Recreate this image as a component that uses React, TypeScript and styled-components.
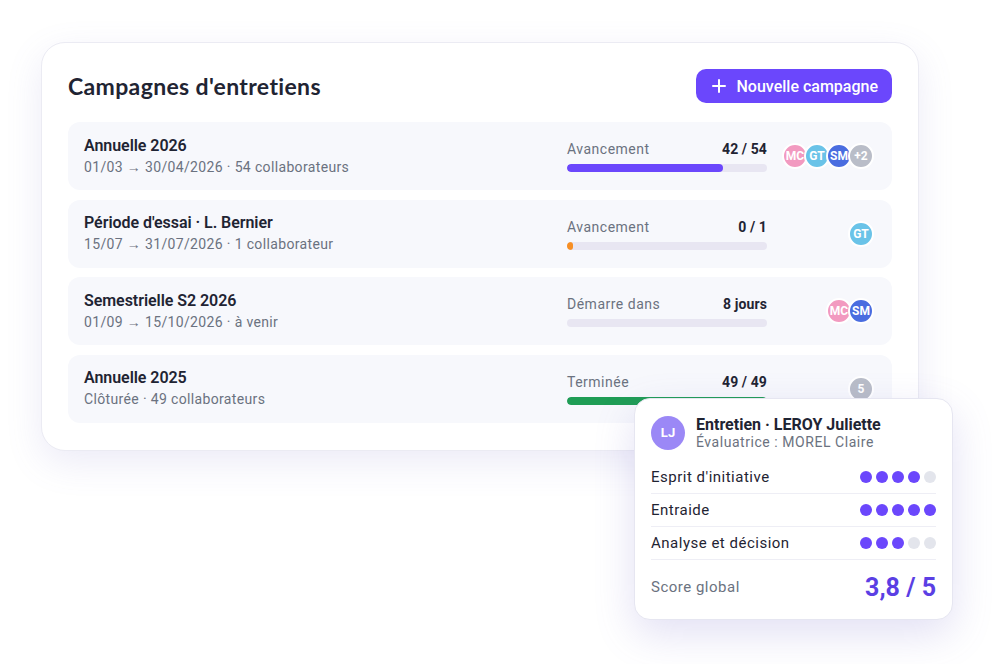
import { styled, createGlobalStyle } from 'styled-components';

const GlobalStyle = createGlobalStyle`
  html, body {
    margin: 0;
    padding: 0;
    background: #ffffff;
  }
  body {
    font-family: Roboto, 'Liberation Sans', sans-serif;
    color: #1f2433;
  }
`;

const Stage = styled.div`
  position: relative;
  width: 1000px;
  height: 664px;
  overflow: hidden;
  padding: 42px 0 0 41px;
  box-sizing: border-box;
`;

const Card = styled.section`
  width: 878px;
  box-sizing: border-box;
  background: #fff;
  border: 1px solid #ebebf3;
  border-radius: 24px;
  padding: 26px 26px 27px 26px;
  box-shadow: 0 12px 36px rgba(120, 110, 200, 0.14);
  display: flex;
  flex-direction: column;
  gap: 19px;
`;

const Header = styled.div`
  display: flex;
  align-items: center;
  justify-content: space-between;
  height: 34px;
`;

const Title = styled.h1`
  margin: 0;
  font-family: Lato, 'Noto Sans', sans-serif;
  font-size: 23px;
  font-weight: 700;
  color: #1f2433;
  letter-spacing: 0.35px;
`;

const PrimaryButton = styled.button`
  display: flex;
  align-items: center;
  gap: 10px;
  height: 34px;
  padding: 0 14px 0 16px;
  border: none;
  border-radius: 10px;
  background: #6b47fc;
  color: #fff;
  font-family: Roboto, sans-serif;
  font-size: 16px;
  font-weight: 500;
`;

const List = styled.div`
  display: flex;
  flex-direction: column;
  gap: 9.5px;
`;

const Row = styled.div`
  display: flex;
  align-items: center;
  height: 68px;
  padding: 0 18px 0 16px;
  background: #f7f8fc;
  border-radius: 12px;
`;

const Info = styled.div`
  flex: 1;
  display: flex;
  flex-direction: column;
  gap: 1px;
`;

const RowTitle = styled.div`
  font-size: 16px;
  font-weight: 600;
  line-height: 20px;
  color: #1f2433;
  letter-spacing: -0.05px;
`;

const RowSub = styled.div`
  font-size: 14px;
  line-height: 20px;
  color: #6b7280;
  letter-spacing: 0.35px;
`;

const Progress = styled.div`
  width: 200px;
  display: flex;
  flex-direction: column;
  gap: 6px;
`;

const ProgressHead = styled.div`
  display: flex;
  justify-content: space-between;
  align-items: center;
  line-height: 18px;
  font-size: 14px;
`;

const ProgressLabel = styled.span`
  color: #6b7280;
  letter-spacing: 0.5px;
`;

const ProgressValue = styled.span`
  font-weight: 700;
  color: #1f2433;
  letter-spacing: 0.1px;
`;

const Track = styled.div`
  height: 8px;
  border-radius: 4px;
  background: #e8e6f2;
  overflow: hidden;
`;

const Fill = styled.div<{ $color: string }>`
  height: 100%;
  border-radius: 4px;
  background: ${(p) => p.$color};
`;

const Avatars = styled.div`
  width: 107px;
  display: flex;
  justify-content: flex-end;
`;

const Avatar = styled.div<{ $bg: string }>`
  width: 22px;
  height: 22px;
  border-radius: 50%;
  border: 2px solid #fff;
  background: ${(p) => p.$bg};
  color: #fff;
  font-size: 12px;
  font-weight: 700;
  display: flex;
  align-items: center;
  justify-content: center;
  overflow: hidden;
  white-space: nowrap;
  margin-left: -4px;
  flex-shrink: 0;
  line-height: 1;
`;

const Popup = styled.div`
  position: absolute;
  left: 634px;
  top: 398px;
  width: 319px;
  box-sizing: border-box;
  padding: 16px 16px 15px 16px;
  background: #fff;
  border: 1px solid #e6e6f1;
  border-radius: 16px;
  box-shadow: 0 14px 40px rgba(110, 100, 200, 0.2);
`;

const PopupHead = styled.div`
  display: flex;
  align-items: center;
  gap: 11px;
  margin-bottom: 11px;
`;

const BigAvatar = styled.div`
  width: 34px;
  height: 34px;
  border-radius: 50%;
  background: #9b88f6;
  color: #fff;
  font-size: 13px;
  font-weight: 700;
  display: flex;
  align-items: center;
  justify-content: center;
`;

const PopupName = styled.div`
  font-size: 16px;
  font-weight: 700;
  line-height: 19px;
  color: #1f2433;
`;

const PopupSub = styled.div`
  font-size: 14px;
  line-height: 16px;
  color: #6b7280;
  letter-spacing: 0.55px;
`;

const Criterion = styled.div`
  display: flex;
  align-items: center;
  justify-content: space-between;
  height: 32px;
  border-bottom: 1px solid #eeeef5;
  font-size: 15px;
  color: #1f2433;
  letter-spacing: 0.5px;
`;

const Dots = styled.div`
  display: flex;
  gap: 4px;
`;

const Dot = styled.span<{ $on: boolean }>`
  width: 12px;
  height: 12px;
  border-radius: 50%;
  background: ${(p) => (p.$on ? '#6b47fc' : '#e3e5ec')};
`;

const Score = styled.div`
  display: flex;
  align-items: center;
  justify-content: space-between;
  height: 34px;
  margin-top: 10px;
`;

const ScoreLabel = styled.span`
  font-size: 15px;
  color: #6b7280;
  letter-spacing: 0.5px;
`;

const ScoreValue = styled.span`
  font-size: 25px;
  font-weight: 700;
  color: #5b3fe4;
`;

type Person = { initials: string; color: string };

const campaigns: {
  title: string;
  sub: string;
  label: string;
  value: string;
  pct: number;
  color: string;
  people: Person[];
}[] = [
  {
    title: 'Annuelle 2026',
    sub: '01/03 → 30/04/2026 · 54 collaborateurs',
    label: 'Avancement',
    value: '42 / 54',
    pct: 78,
    color: '#6b47fc',
    people: [
      { initials: 'MC', color: '#f29ac0' },
      { initials: 'GT', color: '#6ac3e8' },
      { initials: 'SM', color: '#4a6de0' },
      { initials: '+2', color: '#b9bdc8' },
    ],
  },
  {
    title: "Période d'essai · L. Bernier",
    sub: '15/07 → 31/07/2026 · 1 collaborateur',
    label: 'Avancement',
    value: '0 / 1',
    pct: 3,
    color: '#f78f24',
    people: [{ initials: 'GT', color: '#6ac3e8' }],
  },
  {
    title: 'Semestrielle S2 2026',
    sub: '01/09 → 15/10/2026 · à venir',
    label: 'Démarre dans',
    value: '8 jours',
    pct: 0,
    color: '#6b47fc',
    people: [
      { initials: 'MC', color: '#f29ac0' },
      { initials: 'SM', color: '#4a6de0' },
    ],
  },
  {
    title: 'Annuelle 2025',
    sub: 'Clôturée · 49 collaborateurs',
    label: 'Terminée',
    value: '49 / 49',
    pct: 100,
    color: '#1f9d55',
    people: [{ initials: '5', color: '#b9bdc8' }],
  },
];

const criteria = [
  { name: "Esprit d'initiative", score: 4 },
  { name: 'Entraide', score: 5 },
  { name: 'Analyse et décision', score: 3 },
];

export default function App() {
  return (
    <>
      <GlobalStyle />
      <Stage>
        <Card>
          <Header>
            <Title>Campagnes d'entretiens</Title>
            <PrimaryButton>
              <svg width='14' height='14' viewBox='0 0 14 14'>
                <path d='M7 1v12M1 7h12' stroke='#fff' strokeWidth='2' strokeLinecap='round' />
              </svg>
              Nouvelle campagne
            </PrimaryButton>
          </Header>

          <List>
            {campaigns.map((c) => (
              <Row key={c.title}>
                <Info>
                  <RowTitle>{c.title}</RowTitle>
                  <RowSub>{c.sub}</RowSub>
                </Info>
                <Progress>
                  <ProgressHead>
                    <ProgressLabel>{c.label}</ProgressLabel>
                    <ProgressValue>{c.value}</ProgressValue>
                  </ProgressHead>
                  <Track>
                    <Fill $color={c.color} style={{ width: `${c.pct}%` }} />
                  </Track>
                </Progress>
                <Avatars>
                  {c.people.map((p, i) => (
                    <Avatar key={i} $bg={p.color}>
                      {p.initials}
                    </Avatar>
                  ))}
                </Avatars>
              </Row>
            ))}
          </List>
        </Card>

        <Popup>
          <PopupHead>
            <BigAvatar>LJ</BigAvatar>
            <div>
              <PopupName>Entretien · LEROY Juliette</PopupName>
              <PopupSub>Évaluatrice : MOREL Claire</PopupSub>
            </div>
          </PopupHead>
          {criteria.map((c) => (
            <Criterion key={c.name}>
              {c.name}
              <Dots>
                {[1, 2, 3, 4, 5].map((n) => (
                  <Dot key={n} $on={n <= c.score} />
                ))}
              </Dots>
            </Criterion>
          ))}
          <Score>
            <ScoreLabel>Score global</ScoreLabel>
            <ScoreValue>3,8 / 5</ScoreValue>
          </Score>
        </Popup>
      </Stage>
    </>
  );
}
